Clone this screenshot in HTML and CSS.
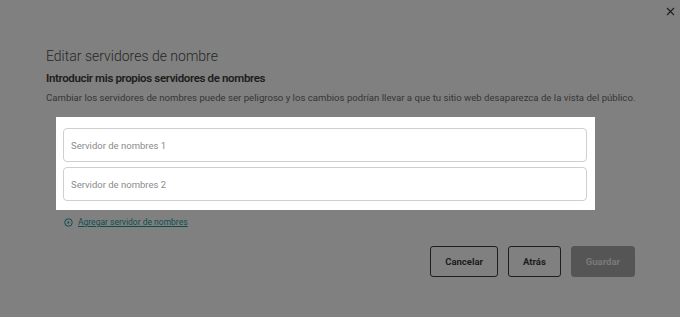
FILE: index.html
```html
<!DOCTYPE html>
<html lang="es">
<head>
    <meta charset="UTF-8">
    <meta name="viewport" content="width=device-width, initial-scale=1.0">
    <title>Editar servidores de nombre</title>
    <link rel="stylesheet" href="styles.css">
</head>
<body>
    <div class="overlay">
        <div class="topbar">
            <button class="close" aria-label="Cerrar">
                <svg width="9" height="9" viewBox="0 0 9 9"><path d="M1 1L8 8M8 1L1 8" stroke="#1f1f1f" stroke-width="1.2" fill="none"/></svg>
            </button>
        </div>
        <main class="modal">
            <h1>Editar servidores de nombre</h1>
            <h2>Introducir mis propios servidores de nombres</h2>
            <p class="warning">Cambiar los servidores de nombres puede ser peligroso y los cambios podrían llevar a que tu sitio web desaparezca de la vista del público.</p>

            <section class="fields">
                <input type="text" placeholder="Servidor de nombres 1">
                <input type="text" placeholder="Servidor de nombres 2">
            </section>

            <a href="#" class="add-link">
                <svg width="9" height="9" viewBox="0 0 10 10"><circle cx="5" cy="5" r="4.2" stroke="#0d4d4e" stroke-width="1.1" fill="none"/><path d="M4 3L6.3 5L4 7Z" fill="#0d4d4e"/></svg>
                <span>Agregar servidor de nombres</span>
            </a>

            <div class="actions">
                <button class="btn">Cancelar</button>
                <button class="btn btn-back">Atrás</button>
                <button class="btn btn-save" disabled>Guardar</button>
            </div>
        </main>
    </div>
</body>
</html>
```

FILE: styles.css
```css
body {
    margin: 0;
    padding: 0;
    background-color: #808080;
    font-family: Roboto, "Noto Sans", Arial, sans-serif;
    color: #262626;
}

.overlay {
    width: 680px;
    height: 317px;
    overflow: hidden;
}

.topbar {
    display: flex;
    justify-content: flex-end;
    padding: 4px 2px 0 0;
    height: 41px;
}

.close {
    background: none;
    border: none;
    padding: 0;
    width: 16px;
    height: 12px;
    cursor: pointer;
}

.modal {
    padding: 0 45px 0 46px;
}

h1 {
    font-size: 14px;
    font-weight: 300;
    margin: 0;
    line-height: 22px;
    color: #262626;
}

h2 {
    font-size: 11.5px;
    font-weight: 600;
    margin: 3px 0 0 0;
    line-height: 16px;
    color: #1c1c1c;
    letter-spacing: -0.35px;
}

.warning {
    font-size: 9.6px;
    margin: 5px 0 0 0;
    line-height: 14px;
    color: #353535;
    white-space: nowrap;
}

.fields {
    background-color: #fff;
    margin: 12px 0 0 10px;
    width: 524px;
    padding: 11px 8px 9px 7px;
    display: flex;
    flex-direction: column;
    gap: 5px;
}

.fields input {
    height: 34px;
    box-sizing: border-box;
    border: 1px solid #cfcfcf;
    border-radius: 4px;
    padding: 0 7px;
    font-family: Roboto, "Noto Sans", Arial, sans-serif;
    font-size: 9.5px;
    color: #333;
}

.fields input::placeholder {
    color: #8a8a8a;
}

.add-link {
    display: inline-flex;
    align-items: center;
    gap: 5px;
    margin: 6px 0 0 18px;
    font-size: 8.5px;
    color: #0d4d4e;
    line-height: 12px;
}

.add-link span {
    text-decoration: underline;
}

.actions {
    display: flex;
    justify-content: flex-end;
    gap: 10px;
    margin-top: 15px;
}

.btn {
    height: 31px;
    padding: 0 14px;
    border: 1.5px solid #1e1e1e;
    border-radius: 3px;
    background: transparent;
    font-family: Roboto, "Noto Sans", Arial, sans-serif;
    font-size: 9.5px;
    font-weight: 700;
    color: #1c1c1c;
    cursor: pointer;
}

.btn-save {
    background-color: #555555;
    border-color: #555555;
    color: #7a7a7a;
}
```
